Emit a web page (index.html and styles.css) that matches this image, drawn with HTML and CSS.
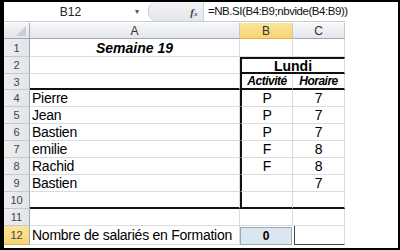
FILE: index.html
```html
<!DOCTYPE html>
<html>
<head>
<meta charset="utf-8">
<link rel="stylesheet" href="styles.css">
</head>
<body>
<div class="frame">
  <div class="fbar">
    <div class="namebox"><span class="name">B12</span><span class="arrow">&#9662;</span></div>
    <div class="fxzone"><span class="fx">f<span class="sub">x</span></span></div>
    <div class="formula">=NB.SI(B4:B9;nbvide(B4:B9))</div>
  </div>
  <div class="grid">
    <div class="corner"><span class="tri"></span></div>
    <div class="ch">A</div>
    <div class="ch sel">B</div>
    <div class="ch">C</div>

    <div class="rh">1</div>
    <div class="c title">Semaine 19</div>
    <div class="c"></div>
    <div class="c"></div>

    <div class="rh">2</div>
    <div class="c"></div>
    <div class="c lundi">Lundi</div>

    <div class="rh">3</div>
    <div class="c tb"></div>
    <div class="c tb tl sub">Activité</div>
    <div class="c tb sub">Horaire</div>

    <div class="rh">4</div>
    <div class="c name">Pierre</div>
    <div class="c tl ctr">P</div>
    <div class="c ctr">7</div>

    <div class="rh">5</div>
    <div class="c name">Jean</div>
    <div class="c tl ctr">P</div>
    <div class="c ctr">7</div>

    <div class="rh">6</div>
    <div class="c name">Bastien</div>
    <div class="c tl ctr">P</div>
    <div class="c ctr">7</div>

    <div class="rh">7</div>
    <div class="c name">emilie</div>
    <div class="c tl ctr">F</div>
    <div class="c ctr">8</div>

    <div class="rh">8</div>
    <div class="c name">Rachid</div>
    <div class="c tl ctr">F</div>
    <div class="c ctr">8</div>

    <div class="rh">9</div>
    <div class="c name">Bastien</div>
    <div class="c tl ctr"></div>
    <div class="c ctr">7</div>

    <div class="rh">10</div>
    <div class="c tb"></div>
    <div class="c tb tl"></div>
    <div class="c tb"></div>

    <div class="rh">11</div>
    <div class="c"></div>
    <div class="c"></div>
    <div class="c"></div>

    <div class="rh sel">12</div>
    <div class="c name">Nombre de salariés en Formation</div>
    <div class="c active">0</div>
    <div class="c next"></div>
  </div>
</div>
</body>
</html>
```

FILE: styles.css
```css
html, body {
  margin: 0;
  padding: 0;
  background: #000;
}
.frame {
  width: 394px;
  height: 246px;
  margin: 2px 2px 2px 4px;
  background: #fff;
  overflow: hidden;
  font-family: "Liberation Sans", Arial, sans-serif;
  color: #000;
}
.fbar {
  display: flex;
  height: 19px;
  border-bottom: 1px solid #c6cbd2;
  background: #fff;
  width: 341px;
}
.namebox {
  flex: 0 0 141px;
  display: flex;
  align-items: center;
  font-size: 12px;
  color: #222;
}
.namebox .name {
  flex: 1;
  text-align: center;
  padding-left: 2px;
}
.namebox .arrow {
  font-size: 8px;
  color: #555;
  width: 10px;
}
.fxzone {
  flex: 0 0 56px;
  background: linear-gradient(#f3f4f6, #e3e6ea);
  border-left: 1px solid #c8ccd2;
  border-radius: 8px 0 0 8px;
  border-right: 1px solid #d0d4da;
  display: flex;
  align-items: center;
  justify-content: flex-end;
  padding-right: 6px;
  box-sizing: border-box;
  margin-left: 3px;
}
.fx {
  font-family: "Liberation Serif", serif;
  font-style: italic;
  font-weight: bold;
  font-size: 11px;
  color: #444;
}
.fx .sub {
  font-size: 7px;
}
.formula {
  flex: 0 0 auto;
  padding-left: 4px;
  font-size: 11.5px;
  letter-spacing: -0.45px;
  line-height: 19px;
  color: #111;
  white-space: nowrap;
}
.grid {
  margin-top: 1px;
  display: grid;
  grid-template-columns: 26px 210px 53px 52px;
  grid-template-rows: 16px 18px 17px 16px repeat(8, 17px) 19px;
  width: 341px;
}
.grid > div {
  box-sizing: border-box;
  border-right: 1px solid #dadcdd;
  border-bottom: 1px solid #dadcdd;
  display: flex;
  align-items: center;
  white-space: nowrap;
  overflow: hidden;
}
.grid > .corner {
  background: linear-gradient(#f4f5f7, #e3e6ea);
  border-right: 1px solid #9fa8b4;
  border-bottom: 1px solid #9fa8b4;
  position: relative;
}
.tri {
  position: absolute;
  right: 3px;
  bottom: 2px;
  width: 0;
  height: 0;
  border-left: 10px solid transparent;
  border-bottom: 10px solid #c9cdd3;
}
.grid > .ch {
  background: linear-gradient(#f6f7f9, #e4e7eb);
  border-right: 1px solid #c4c9d0;
  border-bottom: 1px solid #9fa8b4;
  justify-content: center;
  font-size: 12px;
  color: #333;
}
.grid > .ch.sel {
  background: linear-gradient(#fbe59d, #f7d46e);
  border-bottom: 1px solid #d9b34e;
}
.grid > .rh {
  background: linear-gradient(90deg, #eceef1, #e2e5e9);
  border-right: 1px solid #9fa8b4;
  border-bottom: 1px solid #c4c9d0;
  justify-content: center;
  font-size: 11px;
  color: #444;
}
.grid > .rh.sel {
  background: linear-gradient(#fbe59d, #f7d46e);
  border-bottom: 1px solid #d9b34e;
}
.c {
  font-size: 14px;
  letter-spacing: -0.25px;
}
.title {
  justify-content: center;
  font-weight: bold;
  font-style: italic;
  font-size: 14px;
  letter-spacing: 0;
}
.grid > .lundi {
  grid-column: span 2;
  justify-content: center;
  font-weight: bold;
  font-size: 14px;
  letter-spacing: 0;
  border-top: 2px solid #111;
  border-left: 2px solid #111;
  border-bottom: 2px solid #111;
}
.sub {
  justify-content: center;
  font-weight: bold;
  font-style: italic;
  font-size: 12px;
  letter-spacing: -0.5px;
}
.grid > .tb {
  border-bottom: 2px solid #111;
}
.grid > .tl {
  border-left: 2px solid #111;
}
.name {
  padding-left: 2px;
}
.ctr {
  justify-content: center;
}
.grid > .active {
  justify-content: center;
  font-weight: bold;
  font-size: 12px;
  background: #dce6f1;
  border: 1px solid #9aaabb;
  margin: 1px 1px 0 0;
}
.grid > .next {
  border-left: 1px solid #444;
  border-bottom: 1px solid #444;
  margin-left: 1px;
}
```
